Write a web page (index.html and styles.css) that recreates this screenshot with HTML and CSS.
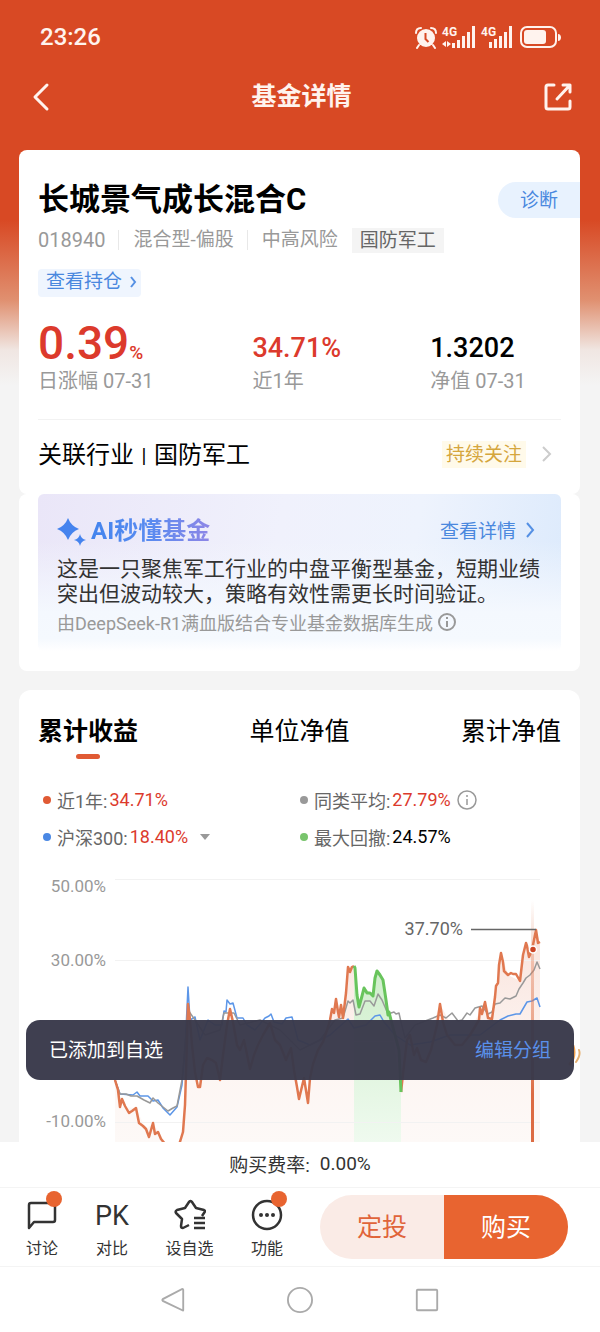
FILE: index.html
```html
<!DOCTYPE html>
<html lang="zh-CN">
<head>
<meta charset="utf-8">
<meta name="viewport" content="width=device-width, initial-scale=1">
<title>基金详情</title>
<link rel="stylesheet" href="styles.css">
</head>
<body>
<main class="screen">
  <div class="status">
    <span class="status-time">23:26</span>
    <svg class="status-icons" viewBox="0 0 148 24" aria-hidden="true">
      <g fill="#fff3ee">
        <circle cx="11" cy="13" r="9"/>
        <path d="M4 20l-2 3M18 20l2 3M1 8c0-4 3-5 5-5M21 8c0-4-3-5-5-5" fill="none" stroke="#fff3ee" stroke-width="2" stroke-linecap="round"/>
        <path d="M10.500 8v6l3 3" fill="none" stroke="#d84924" stroke-width="2"/>
        <text x="27" y="11" class="net">4G</text>
        <path d="M27 19l4-3v6zM36 19l-4-3v6z"/>
        <path d="M37 18h3v5h-3zM42 15h3v8h-3zM47 11h3v12h-3zM52 7h3v16h-3zM57 1h3v22h-3z"/>
        <text x="66" y="11" class="net">4G</text>
        <path d="M74 17h3v6h-3zM79 14h3v9h-3zM84 11h3v12h-3zM89 7h3v16h-3zM94 1h3v22h-3z"/>
        <rect x="106" y="2" width="35" height="20" rx="6" fill="none" stroke="#fff3ee" stroke-width="2"/>
        <rect x="109" y="5" width="22" height="14" rx="3"/>
        <path d="M143 9c4 0 4 7 0 7z"/>
      </g>
    </svg>
  </div>
  <header class="nav">
    <button class="icon-btn" aria-label="返回"><svg width="30" height="30" viewBox="0 0 30 30"><path d="M17 3L5 15l12 12"/></svg></button>
    <h1>基金详情</h1>
    <button class="icon-btn" aria-label="分享"><svg width="30" height="30" viewBox="0 0 30 30"><path d="M11 3H5q-2 0-2 2v20q0 2 2 2h20q2 0 2-2v-6M14 17L27 3M20 3h7v7"/></svg></button>
  </header>

  <section class="card fund">
    <div class="fund-head">
      <h2>长城景气成长混合C</h2>
      <button class="diagnose">诊断</button>
    </div>
    <div class="meta">
      <span class="code">018940</span><span class="sep">混合型-偏股</span><span class="sep">中高风险</span><span class="tag">国防军工</span>
    </div>
    <a class="holdings" href="#">查看持仓<svg width="8" height="12" viewBox="0 0 8 12"><path d="M2 1l4 5-4 5"/></svg></a>
    <div class="stats">
      <div><strong class="big">0.39<small>%</small></strong><span>日涨幅 07-31</span></div>
      <div><strong>34.71%</strong><span>近1年</span></div>
      <div><strong class="dark">1.3202</strong><span>净值 07-31</span></div>
    </div>
    <div class="industry">
      <span class="industry-name">关联行业<i>|</i>国防军工</span>
      <a class="watch" href="#">持续关注</a>
      <svg width="20" height="20" viewBox="0 0 20 20"><path d="M6 3l7 7-7 7"/></svg>
    </div>
  </section>
  <section class="ai-wrap">
    <div class="ai">
      <div class="ai-head">
        <svg width="30" height="30" viewBox="0 0 30 30" fill="#4583ee"><path d="M11 2q3 8 11 11q-8 3-11 11q-3-8-11-11q8-3 11-11zM23 18q1 5 6 6q-5 1-6 6q-1-5-6-6q5-1 6-6z"/></svg>
        <h3>AI秒懂基金</h3>
        <a href="#">查看详情<svg width="12" height="18" viewBox="0 0 12 18"><path d="M3 2l6 7-6 7"/></svg></a>
      </div>
      <p>这是一只聚焦军工行业的中盘平衡型基金，短期业绩突出但波动较大，策略有效性需更长时间验证。</p>
      <div class="source">由DeepSeek-R1满血版结合专业基金数据库生成<svg class="info" viewBox="0 0 20 20"><circle cx="10" cy="10" r="8"/><path d="M10 9v6M10 5v2"/></svg></div>
    </div>
  </section>

  <section class="card perf">
    <div class="tabs" role="tablist">
      <button role="tab" aria-selected="true" class="active">累计收益</button>
      <button role="tab" aria-selected="false">单位净值</button>
      <button role="tab" aria-selected="false">累计净值</button>
    </div>
    <div class="legend">
      <div><i class="dot orange"></i>近1年:<b>34.71%</b></div>
      <div><i class="dot gray"></i>同类平均:<b>27.79%</b><svg class="info" viewBox="0 0 20 20"><circle cx="10" cy="10" r="9"/><path d="M10 9v6M10 5v2"/></svg></div>
      <div><i class="dot blue"></i>沪深300:<b>18.40%</b><svg class="caret" width="10" height="6" viewBox="0 0 10 6"><path d="M0 0h10L5 6z"/></svg></div>
      <div><i class="dot green"></i>最大回撤:<b class="dark">24.57%</b></div>
    </div>
    <svg class="chart" viewBox="38 870 523 272" role="img" aria-label="累计收益走势">
      <defs>
        <linearGradient id="area" x1="0" y1="930" x2="0" y2="1142" gradientUnits="userSpaceOnUse"><stop offset="0" stop-color="#f9e3dc"/><stop offset=".6" stop-color="#fdf5f2"/><stop offset="1" stop-color="#fdf9f7"/></linearGradient>
        <linearGradient id="drop" x1="0" y1="970" x2="0" y2="1142" gradientUnits="userSpaceOnUse"><stop offset="0" stop-color="#cfeecb"/><stop offset="1" stop-color="#effaef"/></linearGradient>
        <linearGradient id="cursor" x1="0" y1="900" x2="0" y2="1142" gradientUnits="userSpaceOnUse"><stop offset="0" stop-color="#e07850" stop-opacity="0"/><stop offset=".2" stop-color="#e07850" stop-opacity=".3"/><stop offset=".5" stop-color="#e07850" stop-opacity=".6"/><stop offset=".8" stop-color="#dc6b43"/></linearGradient>
      </defs>
      <path fill="url(#area)" d="M115 1080L120 1107 136 1108 146 1129 153 1123 165 1142H115zM180 1142L185 1105 188 1004 192 1045 198 1087 207 1058 220 1080 230 1009 250 1069 270 1023 294 1070 299 1099 304 1078 308 1103 313 1064 330 1020 336 999 343 1018 348 967 354 966 359 1007 364 987 373 996 377 971 383 980 391 1020 401 1092 407 1040 421 1060 440 1004 462 1045 485 1002 492 1019 501 953 508 975 520 981 526 943 529 957 536 930 540 943V1142z"/>
      <path fill="url(#drop)" d="M354 966L357 995 359 1007 364 987 373 996 377 971 383 980 386 1000 391 1020 401 1092V1142H354z"/>
      <path stroke="#f2f2f2" d="M115 879.500H540M115 960.500H540M115 1041.500H540M115 1122.500H540"/>
      <g fill="none" stroke-linejoin="round">
        <path stroke="#5c96e8" stroke-width="1.500" d="M115 1080L120 1094 133 1095 137 1092 140 1096 148 1096 153 1101 158 1100 163 1108 170 1115 177 1107 182 1085 185 1050 188 987 190 1020 195 1017 200 1040 208 1020 215 1025 222 1025 224 1011 226 1012 227 1000 230 1004 233 1003 237 1018 243 1018 247 1025 255 1030 265 1018 269 1016 271 1014 274 1022 282 1024 286 1018 292 1017 298 1040 310 1045 330 1035 348 1019 354 1028 366 1025 375 1016 380 1015 384 1022 395 1035 410 1045 430 1042 450 1035 480 1035 500 1020 508 1016 516 1014 520 1014 527 1002 532 1001 537 998 540 1007"/>
        <path stroke="#999" stroke-width="1.500" d="M115 1080L120 1094 126 1094 131 1096 137 1096 144 1100 150 1103 153 1098 158 1103 163 1107 168 1111 173 1108 177 1106 182 1080 188 1010 195 1020 205 1035 220 1030 224 1013 234 1013 240 1025 260 1020 280 1030 300 1050 320 1040 335 1020 343 1018 348 1001 350 1003 353 1000 356 1015 360 1014 365 1001 370 1001 374 1006 378 994 382 1000 388 1014 394 1012 396 1014 399 1013 401 1022 405 1038 415 1025 433 1018 440 1015 446 1018 452 1013 458 1021 462 1020 467 1013 470 1015 475 1008 482 1006 488 1014 492 1012 495 1004 500 1003 505 998 510 999 516 996 519 989 523 983 526 978 530 975 534 970 537 962 540 969"/>
        <path stroke="#e07850" stroke-width="2.500" d="M115 1080L118 1090 120 1107 122 1099 125 1106 129 1113 132 1111 136 1108 139 1123 143 1126 146 1129 149 1137 153 1123 155 1134 158 1132 161 1139 166 1145M179 1145L183 1132 185 1105 187 1040 188 1004 190 1020 192 1045 195 1072 198 1087 200 1087 203 1065 207 1058 212 1060 216 1063 220 1080 223 1055 227 1025 230 1009 233 1022 237 1045 240 1050 244 1040 250 1069 254 1055 258 1045 263 1035 270 1023 275 1040 280 1045 286 1060 291 1048 294 1070 297 1087 299 1099 304 1078 308 1103 310 1078 313 1064 318 1050 323 1042 327 1030 330 1020 332 1009 334 1013 336 999 338 1012 339 1017 341 1005 343 1018 346 993 348 967 350 972 352 967 354 966M401 1092L404 1065 407 1040 410 1035 414 1055 417 1048 421 1060 426 1062 431 1050 437 1025 440 1004 443 1022 447 1035 455 1045 462 1045 470 1035 479 1020 480 1008 482 1014 485 1002 488 1018 492 1019 495 997 496 986 498 983 499 965 501 953 503 962 504 971 508 975 511 973 513 974 516 974 520 981 523 955 526 943 527 946 529 957 532 950 536 930 538 943 540 942"/>
        <path stroke="#68c45c" stroke-width="3" d="M354 966L355 968 357 995 359 1007 362 996 364 988 367 993 370 993 373 996 375 978 377 971 380 975 383 980 386 1000 388 1015 389 1012 391 1020 399 1050 401 1092"/>
      </g>
      <path fill="url(#cursor)" d="M531 900h3v242h-3z"/>
      <circle cx="533" cy="949.500" r="3.500" fill="#cc4425" stroke="#fff" stroke-width="1.500"/>
      <path stroke="#666" stroke-width="1.500" d="M471 929.500H536"/>
      <g class="axis"><text x="106" y="892">50.00%</text><text x="106" y="966">30.00%</text><text x="106" y="1127">-10.00%</text></g>
      <text class="peak" x="463" y="935">37.70%</text>
    </svg>
  </section>
  <svg class="mascot" width="14" height="28" viewBox="0 0 14 28" aria-hidden="true"><path d="M2 22Q8 14 5 4" fill="none" stroke="#efa04f" stroke-width="3" stroke-linecap="round"/><path d="M8 20Q13 13 11 8" fill="none" stroke="#e6b070" stroke-width="2" stroke-linecap="round"/></svg>
  <div class="toast" role="status"><span>已添加到自选</span><button>编辑分组</button></div>
</main>

<footer>
  <div class="fee"><span>购买费率:</span><span>0.00%</span></div>
  <div class="actions">
    <button class="action"><svg viewBox="0 0 32 32"><path d="M3 29V6q0-2 2-2h22q2 0 2 2v15q0 2-2 2H8z"/></svg>讨论<i class="badge"></i></button>
    <button class="action"><span class="pk">PK</span>对比</button>
    <button class="action"><svg viewBox="0 0 32 32"><path d="M15 26l-6 3q-2 0-2-2l1-7-6-6q-1-2 1-3l8-2 4-6q1-2 3 0l4 6 8 2q2 1 0 3l-2 3M20 19h11M20 24h11M20 29h11"/></svg>设自选</button>
    <button class="action"><svg viewBox="0 0 32 32"><circle cx="16" cy="16" r="14"/><g fill="#333" stroke="none"><circle cx="10" cy="16" r="2"/><circle cx="16" cy="16" r="2"/><circle cx="22" cy="16" r="2"/></g></svg>功能<i class="badge"></i></button>
    <div class="buy"><button>定投</button><button class="primary">购买</button></div>
  </div>
  <nav class="system">
    <button aria-label="返回"><svg viewBox="0 0 28 28"><path d="M25 3v22q0 1-1 0L3 15q-1-1 0-2L24 2q1 0 1 1z"/></svg></button>
    <button aria-label="主页"><svg viewBox="0 0 28 28"><circle cx="14" cy="14" r="13"/></svg></button>
    <button aria-label="最近任务"><svg viewBox="0 0 28 28"><rect x="3" y="3" width="22" height="22" rx="1"/></svg></button>
  </nav>
</footer>
</body>
</html>
```
FILE: styles.css
```css
* { box-sizing: border-box; }
body {
  margin: 0;
  height: 100vh;
  display: flex;
  flex-direction: column;
  background: #f4f4f4;
  color: #000;
  font-family: Roboto, "Noto Sans CJK SC", sans-serif;
}
h1, h2, h3, p { margin: 0; }
button { border: 0; padding: 0; background: none; color: inherit; font: inherit; }
a { text-decoration: none; color: #4a88de; }
i { font-style: normal; }
svg { display: block; flex: none; }

.screen {
  position: relative;
  flex: 1;
  min-height: 0;
  overflow: hidden;
  background: linear-gradient(#d84924 220px, #e09070 300px, #f0e6e2 350px, #f4f4f4 385px);
}
.status {
  display: flex;
  justify-content: space-between;
  align-items: center;
  height: 74px;
  padding: 0 37px 0 40px;
  color: #fff3ee;
}
.status-time { font-size: 24px; font-weight: 500; }
.status-icons { width: 148px; height: 24px; }
.net { font: 700 12px Roboto, sans-serif; }
.nav {
  display: flex;
  justify-content: space-between;
  align-items: center;
  height: 46px;
  margin-bottom: 30px;
  padding: 0 27px 0 30px;
  color: #fff3ee;
}
.nav h1 { font-size: 25px; line-height: 46px; font-weight: 700; }
.icon-btn svg { fill: none; stroke: #fff3ee; stroke-width: 3; stroke-linecap: round; stroke-linejoin: round; }

.card, .ai-wrap { margin: 0 20px 0 19px; padding: 0 19px; background: #fff; border-radius: 8px; }
.fund { padding-top: 28px; }
.fund-head { display: flex; justify-content: space-between; align-items: center; height: 44px; }
.fund-head h2 { font-size: 31px; line-height: 44px; font-weight: 700; }
.diagnose {
  width: 82px;
  height: 36px;
  margin-right: -19px;
  padding-bottom: 3px;
  border-radius: 18px 0 0 18px;
  background: #e8f2fe;
  color: #4a88de;
  font-size: 19px;
}
.meta { display: flex; align-items: center; height: 36px; color: #999; font-size: 19px; }
.code { font-size: 20px; }
.sep { margin-left: 13px; padding-left: 14px; border-left: 1px solid #e8e8e8; line-height: 20px; }
.tag { margin-left: 14px; padding: 0 8px; background: #f4f4f4; color: #666; line-height: 25px; }
.holdings {
  display: flex;
  align-items: center;
  gap: 7px;
  width: max-content;
  margin-top: 11px;
  padding: 0 4px 2px 8px;
  border-radius: 4px;
  background: #eff5fe;
  font-size: 19px;
  line-height: 26px;
}
.holdings path, .ai-head a path { fill: none; stroke: #5590e4; stroke-width: 2; }
.stats { display: grid; grid-template-columns: 41fr 34fr 25fr; margin-top: 20px; height: 103px; border-bottom: 1px solid #f2f2f2; }
.stats strong { display: block; height: 50px; color: #dc3a2c; font-size: 27px; line-height: 62px; font-weight: 500; white-space: nowrap; }
.stats strong.big { font-size: 46px; line-height: 52px; font-weight: 500; }
.big small { font-size: 19px; font-weight: 500; }
.stats span { display: block; color: #999; font-size: 20px; line-height: 28px; white-space: nowrap; }
.stats strong.dark, .legend b.dark { color: #000; }
.industry { display: flex; align-items: center; height: 74px; padding-bottom: 6px; }
.industry-name { flex: 1; padding-bottom: 3px; font-size: 24px; }
.industry-name i { display: inline-block; width: 20px; text-align: center; font-size: 20px; }
.watch { padding: 0 4px; background: #fffaea; color: #d5a63d; font-size: 19px; line-height: 27px; }
.industry svg { margin-left: 11px; margin-right: 4px; fill: none; stroke: #ccc; stroke-width: 2; }

.ai-wrap { padding-bottom: 20px; margin-bottom: 19px; }
.ai {
  height: 157px;
  padding: 18px 19px 0;
  border-radius: 6px;
  background:
    linear-gradient(rgba(244, 248, 254, 0) 30%, #f4f8fe 75%, #f5f9fe 92%, #fff),
    linear-gradient(100deg, #eae6f8, #f0f1fc 45%, #eef3fd 70%, #dceafc);
}
.ai-head { display: flex; align-items: center; height: 38px; }
.ai-head h3 {
  margin-left: 4px;
  margin-right: auto;
  font-size: 24px;
  line-height: 38px;
  font-weight: 700;
  background: linear-gradient(90deg, #4384ee, #5a8bf0 50%, #8e86e6);
  background-clip: text;
  -webkit-background-clip: text;
  color: transparent;
}
.ai-head a { display: flex; align-items: center; gap: 8px; margin-right: 6px; padding-bottom: 3px; font-size: 19px; }
.ai p { margin: 7px -4px 0 0; color: #333; font-size: 21px; line-height: 25px; word-break: break-all; }
.source { display: flex; align-items: center; gap: 4px; height: 24px; margin-top: 3px; color: #999; font-size: 18px; white-space: nowrap; }
.info { width: 20px; height: 20px; fill: none; stroke: #999; stroke-width: 2; }

.perf { border-radius: 12px 12px 0 0; }
.tabs { display: flex; justify-content: space-between; height: 80px; }
.tabs button { position: relative; height: 80px; padding-bottom: 3px; font-size: 25px; }
.tabs .active { font-weight: 700; }
.tabs .active::after {
  content: "";
  position: absolute;
  left: 50%;
  bottom: 11px;
  width: 24px;
  height: 5px;
  margin-left: -12px;
  border-radius: 3px;
  background: #e05a34;
}
.legend { display: grid; grid-template-columns: 257px 1fr; grid-auto-rows: 37px; padding: 11px 0 15px 5px; color: #666; font-size: 18px; }
.legend div { display: flex; align-items: center; white-space: nowrap; }
.legend b { margin-left: 2px; color: #dc3a2c; font-weight: 400; }
.legend .info { margin-left: 6px; stroke-width: 1.500; }
.caret { margin-left: 12px; fill: #999; }
.dot { width: 8px; height: 8px; margin-right: 6px; border-radius: 50%; }
.orange { background: #e05a34; }
.gray { background: #999; }
.blue { background: #4a88e4; }
.green { background: #78c46c; }
.chart { width: 100%; height: auto; }
.chart text { font: 17px Roboto, sans-serif; text-anchor: end; fill: #999; }
.chart .peak { font-size: 18px; fill: #666; }

.toast {
  position: absolute;
  left: 26px;
  right: 26px;
  bottom: 62px;
  display: flex;
  justify-content: space-between;
  align-items: center;
  height: 60px;
  padding: 0 23px 4px;
  border-radius: 14px;
  background: rgba(57, 57, 74, .97);
  color: #fff;
  font-size: 19px;
}
.toast button { color: #5a90ea; }
.mascot { position: absolute; right: 18px; bottom: 72px; }

footer { background: #fff; color: #333; }
.fee { display: flex; justify-content: center; align-items: center; gap: 10px; height: 45px; padding-bottom: 3px; font-size: 19px; }
.actions {
  display: flex;
  align-items: center;
  height: 80px;
  padding: 0 32px 0 7px;
  border: solid #f4f4f4;
  border-width: 1px 0;
}
.action {
  position: relative;
  width: 70px;
  display: flex;
  flex-direction: column;
  align-items: center;
  gap: 6px;
  margin-top: 6px;
  font-size: 16px;
  line-height: 24px;
}
.action:nth-child(3) { width: 85px; }
.action svg { width: 32px; height: 32px; fill: none; stroke: #333; stroke-width: 2.500; stroke-linejoin: round; }
.pk { height: 32px; font-size: 27px; line-height: 34px; }
.badge { position: absolute; left: 39px; top: -8px; width: 16px; height: 16px; border-radius: 50%; background: #e86430; }
.buy { flex: 1; display: flex; height: 64px; margin-left: 18px; border-radius: 32px; overflow: hidden; background: #faebe6; color: #e0643a; font-size: 25px; }
.buy button { flex: 1; padding-bottom: 4px; }
.buy .primary { background: #e86430; color: #fff; }
.system { display: flex; justify-content: center; align-items: center; gap: 101px; height: 65px; }
.system svg { width: 26px; height: 26px; fill: none; stroke: #aaa; stroke-width: 2; }
```
